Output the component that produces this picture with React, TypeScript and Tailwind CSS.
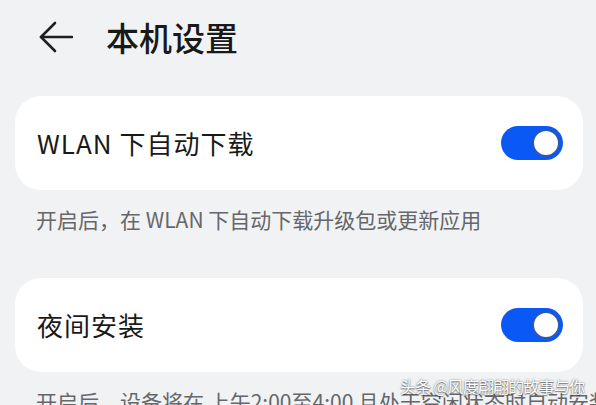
import React from 'react';

const cjk = { fontFamily: '"Noto Sans CJK SC", "Noto Sans", sans-serif' };

const Toggle: React.FC<{ on: boolean }> = ({ on }) => (
  <div
    className={`relative w-[62px] h-[34px] rounded-full ${on ? 'bg-[#0a59f7]' : 'bg-[#d5d7db]'}`}
  >
    <div
      className={`absolute top-[3px] w-[28px] h-[28px] rounded-full bg-white border-2 border-[#2c57b3] ${on ? 'right-[3px]' : 'left-[3px]'}`}
    />
  </div>
);

const SettingRow: React.FC<{ label: string; on: boolean }> = ({ label, on }) => (
  <div className="h-[94px] rounded-[26px] bg-white flex items-center justify-between pl-[22px] pr-[20px]">
    <span className="text-[26px] text-[#191919] leading-none tracking-[1px]">{label}</span>
    <Toggle on={on} />
  </div>
);

const Hint: React.FC<{ text: string }> = ({ text }) => (
  <p className="pl-[21px] pt-[14px] pb-[44px] text-[21px] leading-[30px] text-[#66676a] whitespace-nowrap">
    {text}
  </p>
);

export default function App() {
  return (
    <div className="relative w-[596px] h-[405px] overflow-hidden bg-[#f1f2f4]" style={cjk}>
      <header className="h-[72px] flex items-center pl-[39px] pt-[2px]">
        <svg width="34" height="32" viewBox="0 0 34 32" fill="none" stroke="#1f1f1f" strokeWidth="2.6" strokeLinecap="round" strokeLinejoin="round">
          <path d="M16 2 L2 16 L16 30" />
          <path d="M2 16 H33" />
        </svg>
        <h1 className="ml-[33px] text-[33px] font-medium text-[#191919] leading-none">本机设置</h1>
      </header>

      <div className="px-[15px] pr-[13px] pt-[24px]">
        <SettingRow label="WLAN 下自动下载" on />
        <Hint text="开启后，在 WLAN 下自动下载升级包或更新应用" />
        <SettingRow label="夜间安装" on />
        <Hint text="开启后，设备将在 上午2:00至4:00 且处于空闲状态时自动安装" />
      </div>

      <div className="absolute left-[400px] top-[378px] text-[16px] leading-none text-white tracking-[-0.8px] [text-shadow:0_0_2px_rgba(0,0,0,0.55),0_1px_1px_rgba(0,0,0,0.4)]">
        头条 @风度翩翩的故事与你
      </div>
    </div>
  );
}
